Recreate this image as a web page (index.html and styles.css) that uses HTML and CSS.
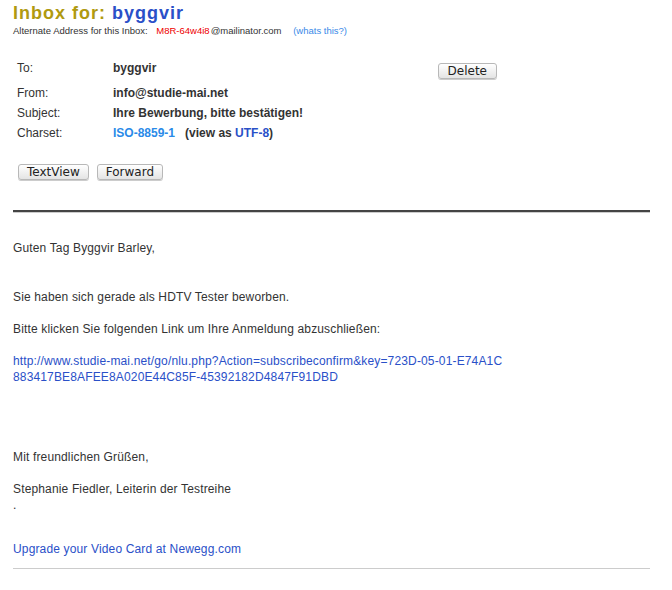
FILE: index.html
```html
<!DOCTYPE html>
<html lang="de">
<head>
  <meta charset="UTF-8">
  <title>Mailinator - byggvir</title>
  <link rel="stylesheet" href="styles.css">
</head>
<body>
  <div class="page">
    <div class="inbox-head">
      <h1><span class="label">Inbox for:</span> <span class="name">byggvir</span></h1>
      <div class="alt">Alternate Address for this Inbox: <span class="alt-addr">M8R-64w4i8</span>@mailinator.com <a href="#" class="whats">(whats this?)</a></div>
    </div>

    <div class="headers">
      <table class="mail-info">
        <tr class="row-to">
          <td class="key">To:</td>
          <td class="val">byggvir</td>
          <td class="act"><button class="btn btn-delete">Delete</button></td>
        </tr>
        <tr>
          <td class="key">From:</td>
          <td class="val">info@studie-mai.net</td>
          <td></td>
        </tr>
        <tr>
          <td class="key">Subject:</td>
          <td class="val">Ihre Bewerbung, bitte bestätigen!</td>
          <td></td>
        </tr>
        <tr>
          <td class="key">Charset:</td>
          <td class="val"><a href="#" class="cs">ISO-8859-1</a> &nbsp; (view as <a href="#" class="utf">UTF-8</a>)</td>
          <td></td>
        </tr>
      </table>

      <div class="tools">
        <button class="btn">TextView</button>
        <button class="btn">Forward</button>
      </div>
    </div>

    <hr class="split">

    <div class="mail-body">
      <p>Guten Tag Byggvir Barley,</p>
      <p class="gap2">Sie haben sich gerade als HDTV Tester beworben.</p>
      <p class="gap1">Bitte klicken Sie folgenden Link um Ihre Anmeldung abzuschließen:</p>
      <p class="gap1"><a href="#">http://www.studie-mai.net/go/nlu.php?Action=subscribeconfirm&amp;key=723D-05-01-E74A1C<br>883417BE8AFEE8A020E44C85F-45392182D4847F91DBD</a></p>
      <p class="gap4">Mit freundlichen Grüßen,</p>
      <p class="gap1">Stephanie Fiedler, Leiterin der Testreihe<br>.</p>
    </div>

    <div class="promo"><a href="#">Upgrade your Video Card at Newegg.com</a></div>
    <hr class="end">
  </div>
</body>
</html>
```

FILE: styles.css
```css
body {
  margin: 0;
  font-family: "Liberation Sans", Arial, sans-serif;
  font-size: 12px;
  color: #333;
  background: #fff;
}
a { color: #2a50c8; text-decoration: none; }

.page { width: 637px; margin-left: 13px; padding-top: 4px; }

/* Inbox header */
.inbox-head h1 { margin: 0; font-size: 18px; line-height: 19px; font-weight: bold; letter-spacing: 1px; }
.inbox-head .label { color: #b09a10; }
.inbox-head .name { color: #2a50c8; }
.alt { font-size: 9.5px; color: #333; margin-top: 2px; line-height: 12px; }
.alt-addr { color: #ee0000; margin: 0 1px 0 6px; }
.whats { color: #3a8ae8; margin-left: 9px; }

/* Header table */
.headers { padding-left: 4px; margin-top: 20px; }
.mail-info { border-collapse: collapse; width: 480px; }
.mail-info td { padding: 0; height: 20px; line-height: 14px; vertical-align: middle; }
.mail-info .row-to td { height: 22px; vertical-align: top; padding-top: 4px; }
.mail-info .key { width: 96px; color: #333; }
.mail-info .val { font-weight: bold; color: #333; }
.mail-info .act { text-align: right; }
.mail-info .cs { color: #2a8ae8; }
.mail-info .utf { color: #2a50c8; }

.btn {
  font-family: "DejaVu Sans", sans-serif;
  font-size: 12px;
  color: #222;
  background: linear-gradient(#ffffff, #e4e4e4);
  border: 1px solid #b8b8b8;
  border-radius: 3px;
  padding: 0 8px;
  line-height: 14px;
  box-shadow: 0 1px 0 #ccc;
}
.btn-delete { display: block; margin: 2px 0 0 auto; padding: 0 9px; }
.tools { margin-top: 21px; display: flex; gap: 8px; padding-left: 1px; }

hr.split {
  margin: 30px 0 0;
  border: 0;
  height: 2px;
  background: #444;
  box-shadow: 0 1px 0 #ccc;
}

/* Message */
.mail-body { margin-top: 28px; line-height: 16px; letter-spacing: 0.15px; }
.mail-body p { margin: 0; }
.mail-body .gap1 { margin-top: 16px; }
.mail-body .gap2 { margin-top: 33px; }
.mail-body .gap4 { margin-top: 64px; }

.promo { margin-top: 28px; line-height: 16px; letter-spacing: 0.15px; }
hr.end { margin: 11px 0 0; border: 0; height: 1px; background: #ccc; }
```
